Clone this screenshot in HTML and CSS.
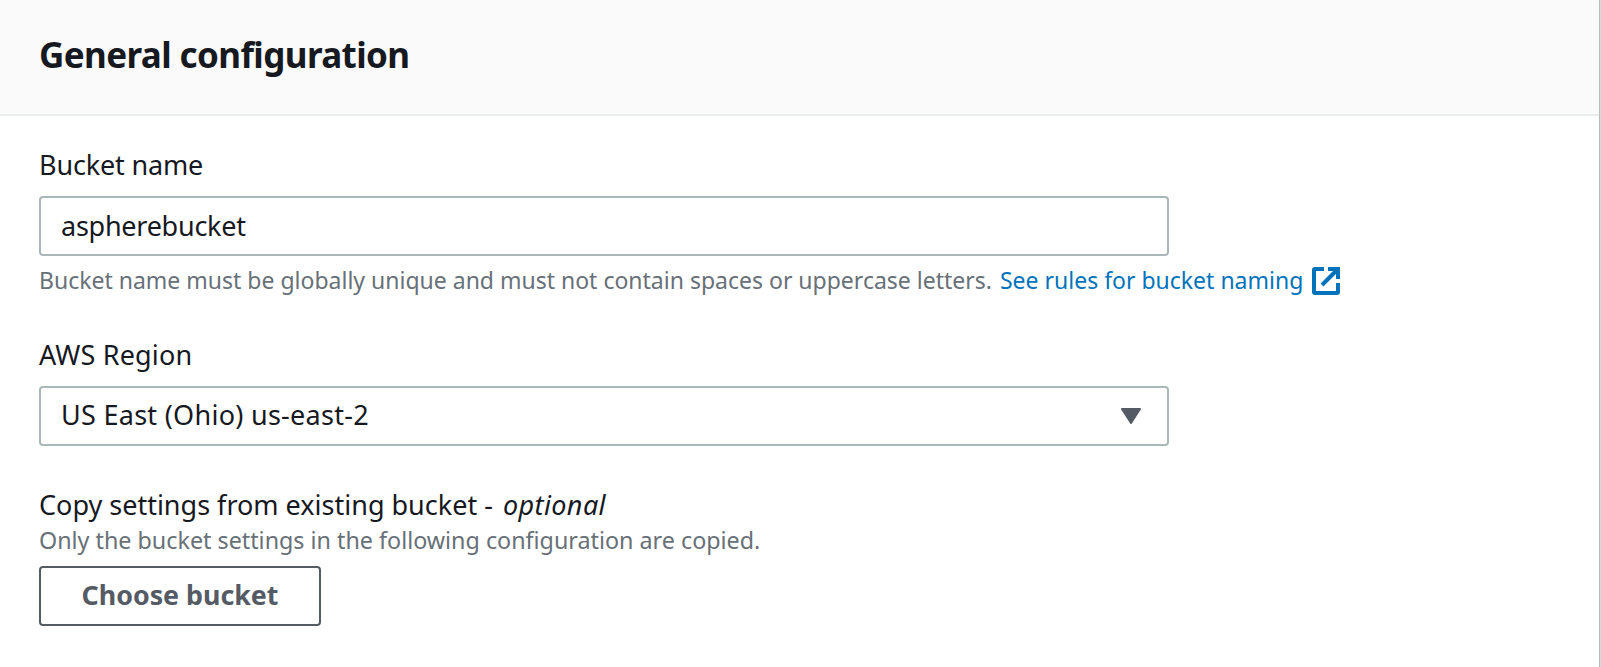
FILE: index.html
```html
<!DOCTYPE html>
<html lang="en">
<head>
<meta charset="utf-8">
<title>General configuration</title>
<link rel="stylesheet" href="styles.css">
</head>
<body>
<main class="panel">
  <header class="panel-header"><h2 class="title"><span>General configuration</span></h2></header>
  <form class="content">
    <section class="field">
      <label class="label name-label" for="bucket">Bucket name</label>
      <input class="control name-input" id="bucket" type="text" value="aspherebucket" spellcheck="false">
      <p class="hint"><span class="rule-text">Bucket name must be globally unique and must not contain spaces or uppercase letters.</span><a class="link" href="#"><span class="link-text">See rules for bucket naming</span><svg class="external" viewBox="0 0 28 28" fill="none" stroke="currentColor" stroke-width="4"><path d="M12 2H3Q2 2 2 3V25Q2 26 3 26H25Q26 26 26 25V16M16 2h10v10M26 2 10 18"/></svg></a></p>
    </section>
    <section class="field region">
      <span class="label region-label">AWS Region</span>
      <div class="control select"><span class="region-value">US East (Ohio) us-east-2</span><svg class="arrow" viewBox="0 0 22 16"><path d="M2 1h18l-9 14z" fill="currentColor" stroke="currentColor" stroke-width="2" stroke-linejoin="round"/></svg></div>
    </section>
    <section class="field copy">
      <span class="label copy-label">Copy settings from existing bucket - <em class="optional">optional</em></span>
      <p class="description"><span class="desc-text">Only the bucket settings in the following configuration are copied.</span></p>
      <button class="button" type="button"><span>Choose bucket</span></button>
    </section>
  </form>
</main>
</body>
</html>
```
FILE: styles.css
```css
* { box-sizing: border-box; }
body { margin: 0; background: #fff; font-family: "Noto Sans", sans-serif; color: #16191f; }
.panel { height: 667px; border-right: 1px solid #d5dbdb; box-shadow: inset -1px 0 #b5bdbd; padding-right: 1px; }
.panel-header { height: 116px; padding: 30px 39px; background: #fafafa; border-bottom: 2px solid #eaeded; }
.title { margin: 0; font-size: 35px; line-height: 50px; letter-spacing: -.6px; white-space: nowrap; }
.content { padding: 30px 39px; }
.field { display: flex; flex-direction: column; align-items: flex-start; }
.label { font-size: 27px; line-height: 38px; height: 36px; white-space: nowrap; }
.name-label { letter-spacing: -.17px; }
.region-label { letter-spacing: .16px; }
.optional { margin-left: 3px; letter-spacing: .4px; }
.control { width: 1130px; height: 60px; margin-top: 14px; padding: 0 20px; border: 2px solid #aab7b8; border-radius: 4px; background: #fff; color: #16191f; font: 27px "Noto Sans", sans-serif; }
.name-input { padding-bottom: 1px; letter-spacing: -.26px; }
.hint { margin: 7px 0 0; height: 34px; font-size: 23px; line-height: 34px; color: #687078; white-space: nowrap; display: flex; }
.link { display: flex; align-items: center; gap: 9px; margin-left: 8px; color: #0073bb; text-decoration: none; }
.external { width: 28px; height: 28px; margin-top: 1px; }
.region { margin-top: 39px; }
.select { display: flex; align-items: center; justify-content: space-between; padding-right: 25px; }
.region-value { padding-bottom: 3px; letter-spacing: .28px; }
.arrow { width: 22px; height: 16px; color: #545b64; }
.copy { margin-top: 40px; }
.description { margin: 1px 0 0; font-size: 23.3px; line-height: 34px; height: 34px; color: #687078; white-space: nowrap; }
.button { width: 282px; height: 60px; margin-top: 9px; padding: 0 0 3px; border: 2px solid #545b64; border-radius: 4px; background: #fff; color: #545b64; font: 700 26.8px "Noto Sans", sans-serif; white-space: nowrap; }
```
